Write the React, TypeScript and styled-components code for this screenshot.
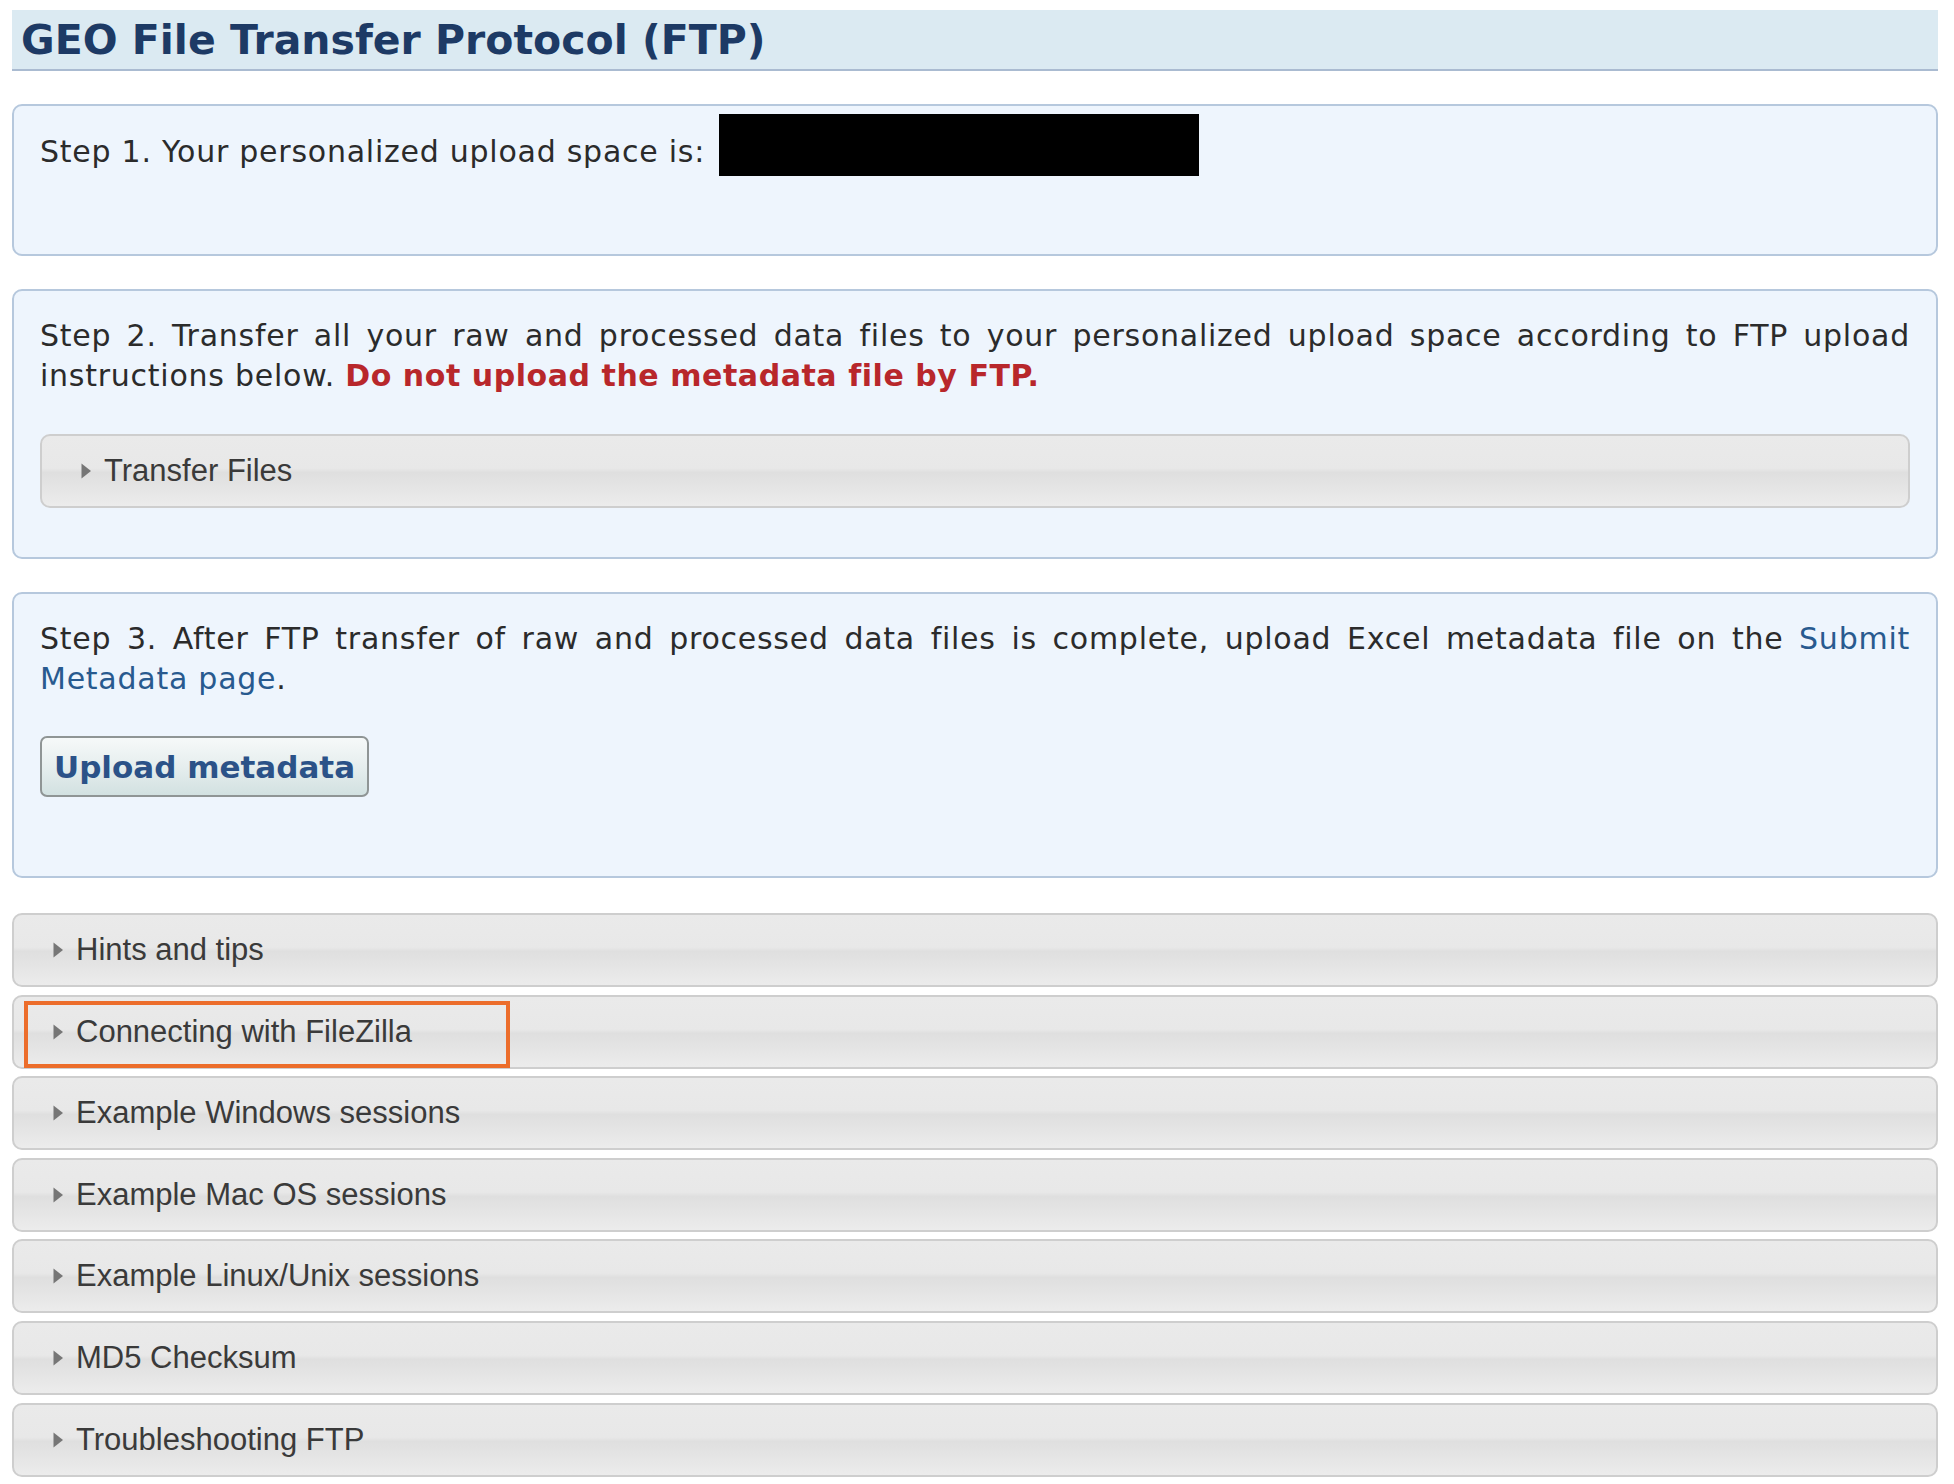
import React from "react";
import styled, { createGlobalStyle } from "styled-components";

const GlobalStyle = createGlobalStyle`
  html, body { margin: 0; padding: 0; background: #ffffff; }
  body { font-family: "DejaVu Sans", Verdana, sans-serif; }
  * { box-sizing: border-box; }
`;

const Page = styled.div`
  padding: 10px 16px 8px 12px;
  display: flex;
  flex-direction: column;
`;

const Header = styled.h1`
  margin: 0;
  height: 61px;
  background: #dbeaf2;
  border-bottom: 2px solid #aabbd1;
  display: flex;
  align-items: center;
  padding: 0 0 0 9px;
  font-family: "DejaVu Sans", Verdana, sans-serif;
  font-weight: bold;
  font-size: 41px;
  color: #1d3a65;
`;

const StepBox = styled.section<{ $pt: number; $pb: number }>`
  margin-top: 33px;
  border: 2px solid #b6c8dd;
  border-radius: 10px;
  background: #eef5fd;
  padding: ${(p) => p.$pt}px 26px ${(p) => p.$pb}px 26px;
  color: #2b2b2b;
  font-family: "DejaVu Sans", Verdana, sans-serif;
  font-size: 30px;
  letter-spacing: 0.75px;
`;

const SpaceRow = styled.div`
  display: flex;
  align-items: flex-start;
`;

const SpaceLabel = styled.span`
  margin-top: 18px;
  line-height: 40px;
  white-space: nowrap;
`;

const Redacted = styled.span`
  display: block;
  width: 480px;
  height: 62px;
  margin-left: 14px;
  background: #000000;
`;

const Para = styled.p`
  margin: 0;
  line-height: 40px;
  text-align: justify;
`;

const Warn = styled.strong`
  color: #b8272b;
  font-weight: bold;
  letter-spacing: 0.55px;
`;

const Link = styled.a`
  color: #285a8f;
  text-decoration: none;
`;

const UploadButton = styled.button`
  margin-top: 37px;
  height: 61px;
  padding: 0 12px;
  border: 2px solid #8f9595;
  border-radius: 7px;
  background: linear-gradient(to bottom, #f6f9f9 0%, #e6eeee 50%, #d2e1e1 100%);
  color: #2b5288;
  font-family: "DejaVu Sans", Verdana, sans-serif;
  font-weight: bold;
  font-size: 31px;
  letter-spacing: 0;
  cursor: pointer;
`;

const Bars = styled.div`
  margin-top: 35px;
  display: flex;
  flex-direction: column;
  gap: 7.6px;
`;

const Bar = styled.div<{ $mt?: number }>`
  position: relative;
  margin-top: ${(p) => p.$mt ?? 0}px;
  height: 74px;
  border: 2px solid #cecece;
  border-radius: 10px;
  background: linear-gradient(
    to bottom,
    #eaeaea 0%,
    #e8e8e8 46%,
    #dfdfdf 52%,
    #e5e5e5 75%,
    #ececec 100%
  );
  display: flex;
  align-items: center;
  padding-left: 39px;
  gap: 13px;
  font-family: "Liberation Sans", Arial, sans-serif;
  font-size: 31px;
  letter-spacing: 0;
  color: #3a3a3a;
`;

const Arrow = styled.svg`
  width: 10px;
  height: 16px;
  flex: none;
`;

const Highlight = styled.span`
  position: absolute;
  left: 10px;
  top: 4px;
  width: 486px;
  height: 67px;
  border: 4px solid #ec6d2b;
  pointer-events: none;
`;

function Accordion({ label, mt, highlight }: { label: string; mt?: number; highlight?: boolean }) {
  return (
    <Bar $mt={mt}>
      <Arrow viewBox="0 0 10 16">
        <polygon points="0.5,0.5 10,8 0.5,15.5" fill="#767676" />
      </Arrow>
      <span>{label}</span>
      {highlight && <Highlight />}
    </Bar>
  );
}

const sections = [
  "Hints and tips",
  "Connecting with FileZilla",
  "Example Windows sessions",
  "Example Mac OS sessions",
  "Example Linux/Unix sessions",
  "MD5 Checksum",
  "Troubleshooting FTP",
];

export default function App() {
  return (
    <>
      <GlobalStyle />
      <Page>
        <Header>GEO File Transfer Protocol (FTP)</Header>

        <StepBox $pt={8} $pb={78}>
          <SpaceRow>
            <SpaceLabel>Step 1. Your personalized upload space is:</SpaceLabel>
            <Redacted />
          </SpaceRow>
        </StepBox>

        <StepBox $pt={25} $pb={49}>
          <Para>
            Step 2. Transfer all your raw and processed data files to your personalized upload space
            according to FTP upload instructions below. <Warn>Do not upload the metadata file by FTP.</Warn>
          </Para>
          <Accordion label="Transfer Files" mt={38} />
        </StepBox>

        <StepBox $pt={25} $pb={79}>
          <Para>
            Step 3. After FTP transfer of raw and processed data files is complete, upload Excel metadata
            file on the <Link href="#">Submit Metadata page</Link>.
          </Para>
          <UploadButton type="button">Upload metadata</UploadButton>
        </StepBox>

        <Bars>
          {sections.map((s) => (
            <Accordion key={s} label={s} highlight={s === "Connecting with FileZilla"} />
          ))}
        </Bars>
      </Page>
    </>
  );
}
